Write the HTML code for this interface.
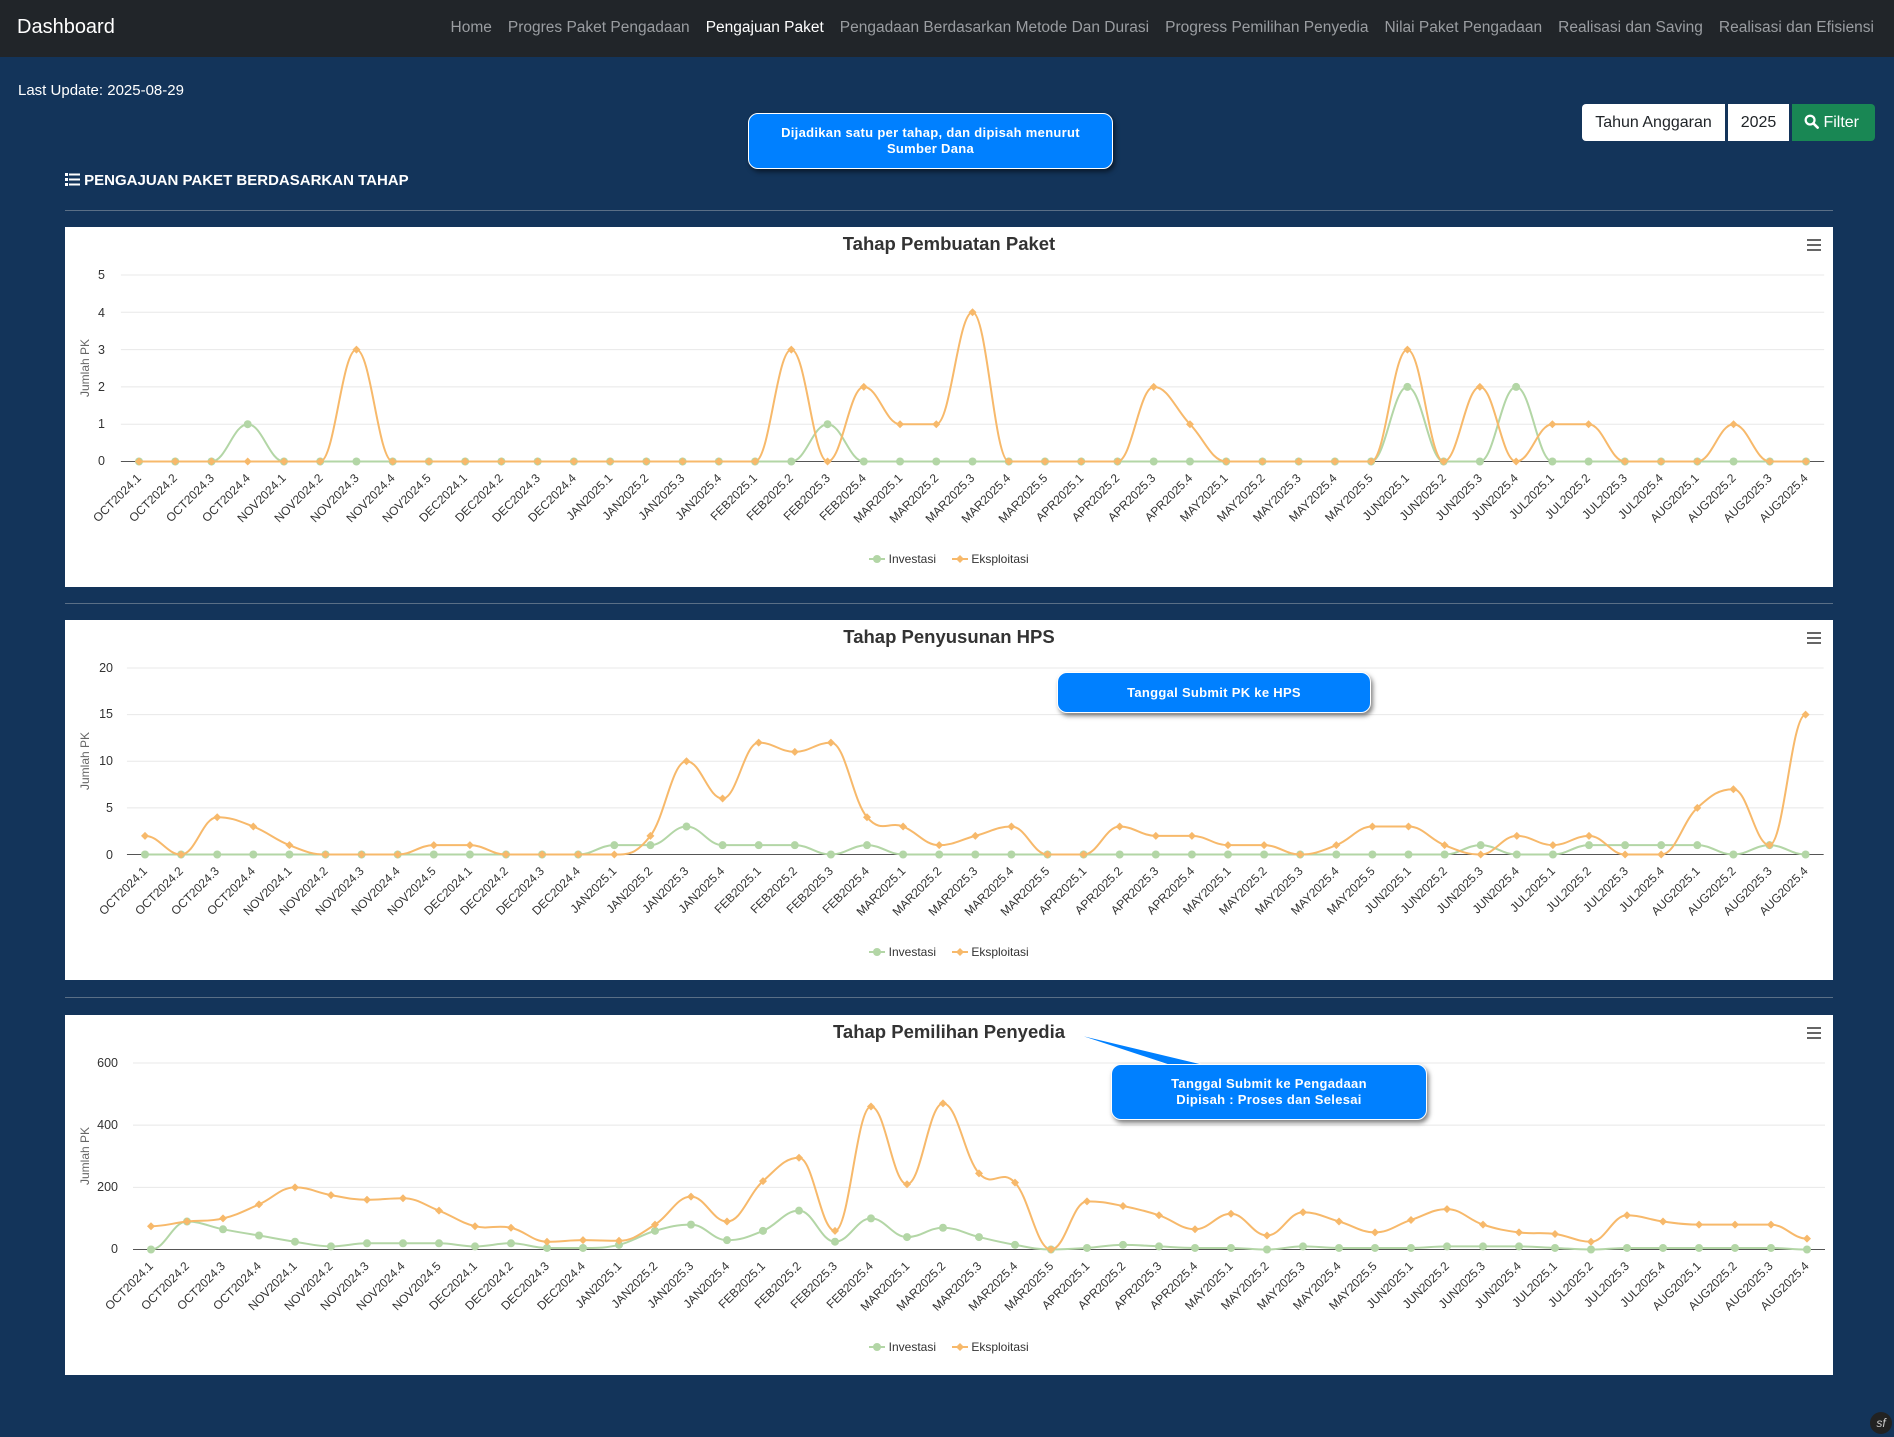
<!DOCTYPE html>
<html><head><meta charset="utf-8">
<style>
*{box-sizing:border-box}
body{margin:0;width:1894px;height:1437px;background:#13345a;font-family:"Liberation Sans",sans-serif;position:relative;overflow:hidden}
.nav{position:absolute;left:0;top:0;width:1894px;height:57px;background:#212529}
.brand{position:absolute;left:17px;top:16px;color:#fff;font-size:20px}
.links{position:absolute;right:20px;top:19px;display:flex;gap:16px;font-size:15.5px;color:#9a9da1;white-space:nowrap}
.links .a{color:#fff}
.abs{position:absolute}
.callout{position:absolute;background:#0080ff;border:1.5px solid #fff;border-radius:10px;color:#fff;font-weight:bold;font-size:13px;text-align:center;line-height:16px;box-shadow:2px 3px 5px rgba(0,0,0,.5);display:flex;align-items:center;justify-content:center;letter-spacing:.3px}
.box{position:absolute;left:65px;width:1768px;height:360px;background:#fff}
.title{position:absolute;left:0;right:0;top:6px;text-align:center;font-weight:bold;font-size:18.5px;color:#333}
.box > svg{position:absolute;left:0;top:0}
.ylab{position:absolute;font-size:12.5px;color:#333;text-align:right;width:40px}
.ytitle{position:absolute;left:-30px;top:134px;width:100px;text-align:center;font-size:12px;color:#666;transform:rotate(-90deg);transform-origin:50% 50%}
.labels{position:absolute;top:246px;display:flex;height:0}
.labels span{flex:1;position:relative;height:0}
.labels span i{font-style:normal;position:absolute;right:50%;top:-4px;white-space:nowrap;font-size:12px;color:#333;transform:rotate(-45deg);transform-origin:100% 50%}
.legend{position:absolute;top:325px;left:0;right:0;text-align:center;font-size:12px;color:#333}
.legend b{font-weight:normal;display:inline-block;margin:0 8px}
.legend svg{vertical-align:-1px}
.hr{position:absolute;left:65px;width:1768px;height:1px;background:#5a6f86}
.menu{position:absolute;right:12px;top:12px;width:14px}
.menu div{height:2px;background:#666;margin-bottom:3px}
</style></head><body>
<div class="nav"><div class="brand">Dashboard</div>
<div class="links"><span>Home</span><span>Progres Paket Pengadaan</span><span class="a">Pengajuan Paket</span><span>Pengadaan Berdasarkan Metode Dan Durasi</span><span>Progress Pemilihan Penyedia</span><span>Nilai Paket Pengadaan</span><span>Realisasi dan Saving</span><span>Realisasi dan Efisiensi</span></div></div>

<div class="abs" style="left:18px;top:82px;color:#fff;font-size:15px">Last Update: 2025-08-29</div>
<div class="abs" style="left:1582px;top:104px;width:143px;height:37px;background:#fff;border-radius:4px 0 0 4px;font-size:16px;color:#212529;text-align:center;line-height:37px">Tahun Anggaran</div>
<div class="abs" style="left:1728px;top:104px;width:61px;height:37px;background:#fff;font-size:16px;color:#212529;text-align:center;line-height:37px">2025</div>
<div class="abs" style="left:1792px;top:104px;width:83px;height:37px;background:#198754;border-radius:0 4px 4px 0;font-size:16px;color:#fff;line-height:37px;padding-left:12px"><svg width="15" height="15" style="vertical-align:-2px" viewBox="0 0 16 16"><circle cx="6.5" cy="6.5" r="4.7" fill="none" stroke="#fff" stroke-width="2.4"/><line x1="10" y1="10" x2="14.5" y2="14.5" stroke="#fff" stroke-width="2.8" stroke-linecap="round"/></svg> Filter</div>

<div class="callout" style="left:748px;top:113px;width:365px;height:56px">Dijadikan satu per tahap, dan dipisah menurut<br>Sumber Dana</div>

<div class="abs" style="left:65px;top:172px;color:#fff;font-weight:bold;font-size:15px"><svg width="15" height="13" viewBox="0 0 15 13" style="vertical-align:-1px"><g fill="#fff"><rect x="0" y="0" width="3" height="3"/><rect x="0" y="5" width="3" height="3"/><rect x="0" y="10" width="3" height="3"/><rect x="4" y="0.5" width="11" height="2"/><rect x="4" y="5.5" width="11" height="2"/><rect x="4" y="10.5" width="11" height="2"/></g></svg> PENGAJUAN PAKET BERDASARKAN TAHAP</div>
<div class="hr" style="top:210px"></div>

<!-- CHART 1 -->
<div class="box" style="top:227px">
<div class="title">Tahap Pembuatan Paket</div>
<div class="menu"><div></div><div></div><div></div></div>
<svg id="s1" width="1768" height="360"></svg>
<div class="ytitle">Jumlah PK</div>
<div class="ylab" style="left:0;top:227px">0</div><div class="ylab" style="left:0;top:190px">1</div><div class="ylab" style="left:0;top:153px">2</div><div class="ylab" style="left:0;top:116px">3</div><div class="ylab" style="left:0;top:79px">4</div><div class="ylab" style="left:0;top:41px">5</div>
<div class="labels" style="left:56px;width:1703px"><span><i>OCT2024.1</i></span><span><i>OCT2024.2</i></span><span><i>OCT2024.3</i></span><span><i>OCT2024.4</i></span><span><i>NOV2024.1</i></span><span><i>NOV2024.2</i></span><span><i>NOV2024.3</i></span><span><i>NOV2024.4</i></span><span><i>NOV2024.5</i></span><span><i>DEC2024.1</i></span><span><i>DEC2024.2</i></span><span><i>DEC2024.3</i></span><span><i>DEC2024.4</i></span><span><i>JAN2025.1</i></span><span><i>JAN2025.2</i></span><span><i>JAN2025.3</i></span><span><i>JAN2025.4</i></span><span><i>FEB2025.1</i></span><span><i>FEB2025.2</i></span><span><i>FEB2025.3</i></span><span><i>FEB2025.4</i></span><span><i>MAR2025.1</i></span><span><i>MAR2025.2</i></span><span><i>MAR2025.3</i></span><span><i>MAR2025.4</i></span><span><i>MAR2025.5</i></span><span><i>APR2025.1</i></span><span><i>APR2025.2</i></span><span><i>APR2025.3</i></span><span><i>APR2025.4</i></span><span><i>MAY2025.1</i></span><span><i>MAY2025.2</i></span><span><i>MAY2025.3</i></span><span><i>MAY2025.4</i></span><span><i>MAY2025.5</i></span><span><i>JUN2025.1</i></span><span><i>JUN2025.2</i></span><span><i>JUN2025.3</i></span><span><i>JUN2025.4</i></span><span><i>JUL2025.1</i></span><span><i>JUL2025.2</i></span><span><i>JUL2025.3</i></span><span><i>JUL2025.4</i></span><span><i>AUG2025.1</i></span><span><i>AUG2025.2</i></span><span><i>AUG2025.3</i></span><span><i>AUG2025.4</i></span></div>
<div class="legend"><b><svg width="16" height="10"><line x1="0" y1="5" x2="16" y2="5" stroke="#b3d6a6" stroke-width="2"/><circle cx="8" cy="5" r="4" fill="#b3d6a6"/></svg> Investasi</b><b><svg width="16" height="10"><line x1="0" y1="5" x2="16" y2="5" stroke="#f7b96b" stroke-width="2"/><path d="M8 1L12 5L8 9L4 5Z" fill="#f7b96b"/></svg> Eksploitasi</b></div>
</div>
<div class="hr" style="top:603px"></div>

<!-- CHART 2 -->
<div class="box" style="top:620px">
<div class="title">Tahap Penyusunan HPS</div>
<div class="menu"><div></div><div></div><div></div></div>
<svg id="s2" width="1768" height="360"></svg>
<div class="ytitle">Jumlah PK</div>
<div class="ylab" style="left:8px;top:228px">0</div><div class="ylab" style="left:8px;top:181px">5</div><div class="ylab" style="left:8px;top:134px">10</div><div class="ylab" style="left:8px;top:87px">15</div><div class="ylab" style="left:8px;top:41px">20</div>
<div class="labels" style="left:62px;width:1697px"><span><i>OCT2024.1</i></span><span><i>OCT2024.2</i></span><span><i>OCT2024.3</i></span><span><i>OCT2024.4</i></span><span><i>NOV2024.1</i></span><span><i>NOV2024.2</i></span><span><i>NOV2024.3</i></span><span><i>NOV2024.4</i></span><span><i>NOV2024.5</i></span><span><i>DEC2024.1</i></span><span><i>DEC2024.2</i></span><span><i>DEC2024.3</i></span><span><i>DEC2024.4</i></span><span><i>JAN2025.1</i></span><span><i>JAN2025.2</i></span><span><i>JAN2025.3</i></span><span><i>JAN2025.4</i></span><span><i>FEB2025.1</i></span><span><i>FEB2025.2</i></span><span><i>FEB2025.3</i></span><span><i>FEB2025.4</i></span><span><i>MAR2025.1</i></span><span><i>MAR2025.2</i></span><span><i>MAR2025.3</i></span><span><i>MAR2025.4</i></span><span><i>MAR2025.5</i></span><span><i>APR2025.1</i></span><span><i>APR2025.2</i></span><span><i>APR2025.3</i></span><span><i>APR2025.4</i></span><span><i>MAY2025.1</i></span><span><i>MAY2025.2</i></span><span><i>MAY2025.3</i></span><span><i>MAY2025.4</i></span><span><i>MAY2025.5</i></span><span><i>JUN2025.1</i></span><span><i>JUN2025.2</i></span><span><i>JUN2025.3</i></span><span><i>JUN2025.4</i></span><span><i>JUL2025.1</i></span><span><i>JUL2025.2</i></span><span><i>JUL2025.3</i></span><span><i>JUL2025.4</i></span><span><i>AUG2025.1</i></span><span><i>AUG2025.2</i></span><span><i>AUG2025.3</i></span><span><i>AUG2025.4</i></span></div>
<div class="legend"><b><svg width="16" height="10"><line x1="0" y1="5" x2="16" y2="5" stroke="#b3d6a6" stroke-width="2"/><circle cx="8" cy="5" r="4" fill="#b3d6a6"/></svg> Investasi</b><b><svg width="16" height="10"><line x1="0" y1="5" x2="16" y2="5" stroke="#f7b96b" stroke-width="2"/><path d="M8 1L12 5L8 9L4 5Z" fill="#f7b96b"/></svg> Eksploitasi</b></div>
</div>
<div class="callout" style="left:1057px;top:672px;width:314px;height:41px">Tanggal Submit PK ke HPS</div>
<div class="hr" style="top:997px"></div>

<!-- CHART 3 -->
<div class="box" style="top:1015px">
<div class="title">Tahap Pemilihan Penyedia</div>
<div class="menu"><div></div><div></div><div></div></div>
<svg id="s3" width="1768" height="360"></svg>
<div class="ytitle">Jumlah PK</div>
<div class="ylab" style="left:13px;top:227px">0</div><div class="ylab" style="left:13px;top:165px">200</div><div class="ylab" style="left:13px;top:103px">400</div><div class="ylab" style="left:13px;top:41px">600</div>
<div class="labels" style="left:68px;width:1692px"><span><i>OCT2024.1</i></span><span><i>OCT2024.2</i></span><span><i>OCT2024.3</i></span><span><i>OCT2024.4</i></span><span><i>NOV2024.1</i></span><span><i>NOV2024.2</i></span><span><i>NOV2024.3</i></span><span><i>NOV2024.4</i></span><span><i>NOV2024.5</i></span><span><i>DEC2024.1</i></span><span><i>DEC2024.2</i></span><span><i>DEC2024.3</i></span><span><i>DEC2024.4</i></span><span><i>JAN2025.1</i></span><span><i>JAN2025.2</i></span><span><i>JAN2025.3</i></span><span><i>JAN2025.4</i></span><span><i>FEB2025.1</i></span><span><i>FEB2025.2</i></span><span><i>FEB2025.3</i></span><span><i>FEB2025.4</i></span><span><i>MAR2025.1</i></span><span><i>MAR2025.2</i></span><span><i>MAR2025.3</i></span><span><i>MAR2025.4</i></span><span><i>MAR2025.5</i></span><span><i>APR2025.1</i></span><span><i>APR2025.2</i></span><span><i>APR2025.3</i></span><span><i>APR2025.4</i></span><span><i>MAY2025.1</i></span><span><i>MAY2025.2</i></span><span><i>MAY2025.3</i></span><span><i>MAY2025.4</i></span><span><i>MAY2025.5</i></span><span><i>JUN2025.1</i></span><span><i>JUN2025.2</i></span><span><i>JUN2025.3</i></span><span><i>JUN2025.4</i></span><span><i>JUL2025.1</i></span><span><i>JUL2025.2</i></span><span><i>JUL2025.3</i></span><span><i>JUL2025.4</i></span><span><i>AUG2025.1</i></span><span><i>AUG2025.2</i></span><span><i>AUG2025.3</i></span><span><i>AUG2025.4</i></span></div>
<div class="legend"><b><svg width="16" height="10"><line x1="0" y1="5" x2="16" y2="5" stroke="#b3d6a6" stroke-width="2"/><circle cx="8" cy="5" r="4" fill="#b3d6a6"/></svg> Investasi</b><b><svg width="16" height="10"><line x1="0" y1="5" x2="16" y2="5" stroke="#f7b96b" stroke-width="2"/><path d="M8 1L12 5L8 9L4 5Z" fill="#f7b96b"/></svg> Eksploitasi</b></div>
</div>
<svg class="abs" style="left:0;top:0" width="1894" height="1437" pointer-events="none"><path d="M1072 1033 L1172 1066 L1210 1066 Z" fill="#0080ff" stroke="#fff" stroke-width="1"/></svg>
<div class="callout" style="left:1111px;top:1064px;width:316px;height:56px">Tanggal Submit ke Pengadaan<br>Dipisah : Proses dan Selesai</div>

<div class="abs" style="left:1870px;top:1412px;width:22px;height:22px;border-radius:50%;background:#222;color:#ccc;font-size:12px;text-align:center;line-height:22px;font-style:italic">sf</div>

<script>
function draw(id,x0,dx,max,steps,green,orange){
  var yT=48,yB=234.5,n=47,s='';
  function Y(v){return yB-v/max*(yB-yT);}
  var L=x0-dx/2,R=x0+46*dx+dx/2;
  steps.forEach(function(v){var y=Y(v);s+='<line x1="'+L+'" x2="'+R+'" y1="'+y+'" y2="'+y+'" stroke="'+(v==0?'#555':'#e8e8e8')+'" stroke-width="1"/>';});
  function path(d){
    var xs=d.map(function(_,i){return x0+i*dx}),ys=d.map(Y),m=[];
    for(var i=0;i<n;i++){
      if(i==0||i==n-1){m.push(0);continue;}
      var a=ys[i-1],b=ys[i],c=ys[i+1];
      if((b<=a&&b<=c)||(b>=a&&b>=c))m.push(0);else m.push((c-a)/(2*dx));
    }
    var p='M'+xs[0]+' '+ys[0];
    for(var i=0;i<n-1;i++){var k=0.4*dx;
      p+=' C'+(xs[i]+k)+' '+(ys[i]+m[i]*k)+' '+(xs[i+1]-k)+' '+(ys[i+1]-m[i+1]*k)+' '+xs[i+1]+' '+ys[i+1];}
    return {p:p,xs:xs,ys:ys};
  }
  var g=path(green),o=path(orange);
  s+='<path d="'+g.p+'" fill="none" stroke="#b3d6a6" stroke-width="2"/>';
  g.xs.forEach(function(x,i){s+='<circle cx="'+x+'" cy="'+g.ys[i]+'" r="4" fill="#b3d6a6"/>';});
  s+='<path d="'+o.p+'" fill="none" stroke="#f7b96b" stroke-width="2"/>';
  o.xs.forEach(function(x,i){var y=o.ys[i];s+='<path d="M'+x+' '+(y-4)+'L'+(x+4)+' '+y+'L'+x+' '+(y+4)+'L'+(x-4)+' '+y+'Z" fill="#f7b96b"/>';});
  document.getElementById(id).innerHTML=s;
}
var z=function(){var a=[];for(var i=0;i<47;i++)a.push(0);return a;};
var g1=z();g1[3]=1;g1[19]=1;g1[35]=2;g1[38]=2;
draw('s1',74,36.24,5,[0,1,2,3,4,5],g1,[0,0,0,0,0,0,3,0,0,0,0,0,0,0,0,0,0,0,3,0,2,1,1,4,0,0,0,0,2,1,0,0,0,0,0,3,0,2,0,1,1,0,0,0,1,0,0]);
var g2=z();[13,14,16,17,18,20,37,40,41,42,43,45].forEach(function(i){g2[i]=1});g2[15]=3;
draw('s2',80,36.1,20,[0,5,10,15,20],g2,[2,0,4,3,1,0,0,0,1,1,0,0,0,0,2,10,6,12,11,12,4,3,1,2,3,0,0,3,2,2,1,1,0,1,3,3,1,0,2,1,2,0,0,5,7,1,15]);
draw('s3',86,36.0,600,[0,200,400,600],[0,90,65,45,25,10,20,20,20,10,20,5,5,15,60,80,30,60,125,25,100,40,70,40,15,0,5,15,10,5,5,0,10,5,5,5,10,10,10,5,0,5,5,5,5,5,0],[75,90,100,145,200,175,160,165,125,75,70,25,30,28,80,170,90,220,295,60,460,210,470,245,215,0,155,140,110,65,115,45,120,90,55,95,130,80,55,50,25,110,90,80,80,80,35]);
</script>
</body></html>
